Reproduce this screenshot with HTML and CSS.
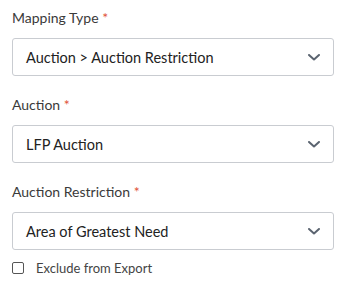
FILE: index.html
```html
<!DOCTYPE html>
<html>
<head>
<meta charset="utf-8">
<link rel="stylesheet" href="styles.css">
</head>
<body>
<form class="form">
  <div class="field">
    <label class="label">Mapping Type <span class="req">*</span></label>
    <div class="select">
      <span class="value">Auction &gt; Auction Restriction</span>
      <svg class="chev" width="12" height="7" viewBox="0 0 12 7"><path d="M1 1 L6 5.5 L11 1" fill="none" stroke="#5b6470" stroke-width="2" stroke-linecap="round" stroke-linejoin="round"/></svg>
    </div>
  </div>
  <div class="field">
    <label class="label">Auction <span class="req">*</span></label>
    <div class="select">
      <span class="value">LFP Auction</span>
      <svg class="chev" width="12" height="7" viewBox="0 0 12 7"><path d="M1 1 L6 5.5 L11 1" fill="none" stroke="#5b6470" stroke-width="2" stroke-linecap="round" stroke-linejoin="round"/></svg>
    </div>
  </div>
  <div class="field">
    <label class="label">Auction Restriction <span class="req">*</span></label>
    <div class="select">
      <span class="value">Area of Greatest Need</span>
      <svg class="chev" width="12" height="7" viewBox="0 0 12 7"><path d="M1 1 L6 5.5 L11 1" fill="none" stroke="#5b6470" stroke-width="2" stroke-linecap="round" stroke-linejoin="round"/></svg>
    </div>
  </div>
  <label class="check"><span class="box"></span>Exclude from Export</label>
</form>
</body>
</html>
```

FILE: styles.css
```css
html, body { margin: 0; padding: 0; background: #fff; }
body { font-family: "Lato", "Open Sans", sans-serif; color: #333; }
.form { padding: 9px 14px 0 12px; display: flex; flex-direction: column; }
.field { display: flex; flex-direction: column; margin-bottom: 20px; }
.label { font-size: 14px; line-height: 18px; color: #3a3a3a; margin-bottom: 11px; }
.req { color: #e0533a; }
.select {
  height: 38px; box-sizing: border-box; border: 1px solid #c9ccd1; border-radius: 3px;
  display: flex; align-items: center; justify-content: space-between;
  padding: 0 13px 0 13px;
}
.value { font-size: 14.5px; color: #222; }
.chev { display: block; }
.check { display: flex; align-items: center; font-size: 13px; line-height: 18px; color: #444; margin-top: -11px; }
.box { width: 12px; height: 12px; box-sizing: border-box; border: 1px solid #555; border-radius: 2px; margin-right: 12px; }
```
